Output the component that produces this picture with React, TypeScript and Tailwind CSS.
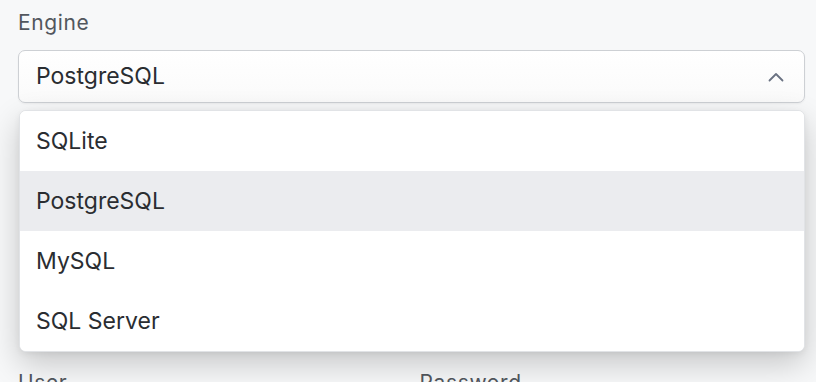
import { useState } from 'react';

const ENGINES = ['SQLite', 'PostgreSQL', 'MySQL', 'SQL Server'];

function Chevron() {
  return (
    <svg width="16" height="10" viewBox="0 0 16 10" fill="none" className="text-gray-500">
      <path d="M1.5 8.5L8 2L14.5 8.5" stroke="currentColor" strokeWidth="1.8" strokeLinecap="round" strokeLinejoin="round" />
    </svg>
  );
}

function Field({ label }: { label: string }) {
  return (
    <div className="flex flex-col gap-2">
      <label className="text-[21px] leading-[28px] tracking-[0.03em] text-[#52575e]">{label}</label>
      <div className="h-[53px] rounded-[7px] border border-[#d0d3d7] bg-white" />
    </div>
  );
}

export default function App() {
  const [value, setValue] = useState('PostgreSQL');
  const [open, setOpen] = useState(true);

  return (
    <div
      className="h-[382px] w-[816px] overflow-hidden bg-[#f7f8f9] pl-[18px] pr-[11px] pt-[9px] text-[#2a2d31]"
      style={{ fontFamily: 'Inter, "Noto Sans", sans-serif' }}
    >
      <div className="relative z-10 flex flex-col gap-[13px]">
        <label className="text-[21px] leading-[28px] tracking-[0.03em] text-[#52575e]">Engine</label>
        <div className="relative">
          <button
            onClick={() => setOpen(!open)}
            className="flex h-[53px] w-full items-center justify-between rounded-[7px] border border-[#cdd0d4] bg-gradient-to-b from-white to-[#fafafa] pl-[17px] pr-[20px] text-left text-[23px] shadow-[0_1px_2px_rgba(0,0,0,0.05)]"
          >
            <span>{value}</span>
            <Chevron />
          </button>

          {open && (
            <div className="absolute left-px right-0 top-[60px] z-10 overflow-hidden rounded-[7px] border border-[#e1e3e6] bg-white shadow-[0_12px_32px_rgba(0,0,0,0.2),0_2px_6px_rgba(0,0,0,0.06)]">
              {ENGINES.map((engine) => (
                <div
                  key={engine}
                  onClick={() => {
                    setValue(engine);
                    setOpen(false);
                  }}
                  className={`flex h-[60px] items-center px-4 text-[23px] ${
                    engine === value ? 'bg-[#ebecef]' : 'bg-white'
                  }`}
                >
                  {engine}
                </div>
              ))}
            </div>
          )}
        </div>
      </div>

      <div className="mt-[266px] grid grid-cols-2 gap-x-4">
        <Field label="User" />
        <Field label="Password" />
      </div>
    </div>
  );
}
